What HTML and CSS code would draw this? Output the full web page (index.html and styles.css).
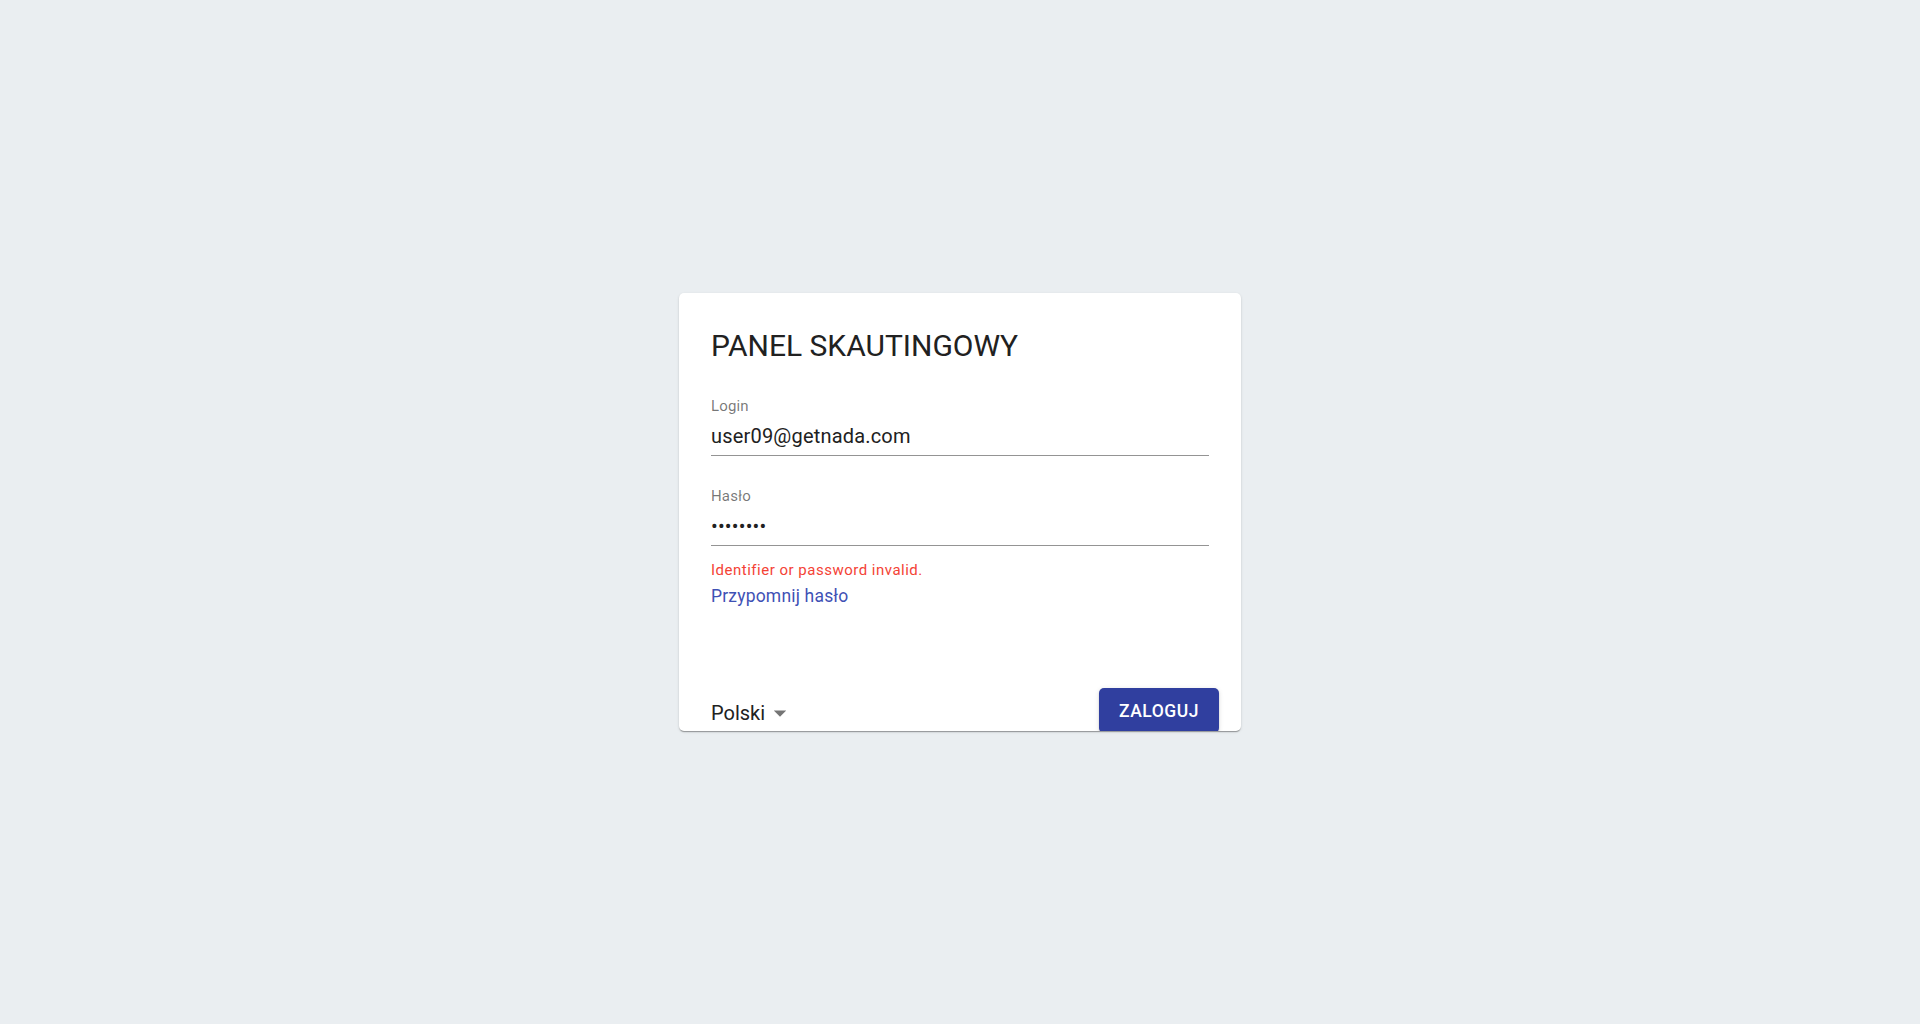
FILE: index.html
```html
<!DOCTYPE html>
<html lang="pl">
<head>
<meta charset="utf-8">
<title>Panel Skautingowy</title>
<link rel="stylesheet" href="styles.css">
</head>
<body>
<main class="page">
  <form class="card" onsubmit="return false">
    <h1 class="title">PANEL SKAUTINGOWY</h1>
    <div class="field field-login">
      <label class="field-label" for="login">Login</label>
      <div class="field-input">
        <input id="login" type="text" value="user09@getnada.com">
      </div>
    </div>
    <div class="field field-pass">
      <label class="field-label" for="pass">Hasło</label>
      <div class="field-input">
        <input id="pass" type="password" value="xxxxxxxx">
      </div>
    </div>
    <p class="error">Identifier or password invalid.</p>
    <a class="link" href="#">Przypomnij hasło</a>
    <div class="footer">
      <div class="lang">
        <span class="lang-text">Polski</span>
        <svg class="lang-icon" viewBox="0 0 24 24" width="30" height="30"><path d="M7 10l5 5 5-5z"/></svg>
      </div>
      <button class="btn" type="submit">ZALOGUJ</button>
    </div>
  </form>
</main>
</body>
</html>
```

FILE: styles.css
```css
html, body {
  margin: 0;
  padding: 0;
}
body {
  background: #eaeef1;
  font-family: Roboto, "Noto Sans", "Liberation Sans", sans-serif;
  color: rgba(0, 0, 0, 0.87);
}
.page {
  height: 100vh;
  display: flex;
  align-items: center;
  justify-content: center;
}
.card {
  box-sizing: border-box;
  width: 562px;
  height: 438px;
  background: #fff;
  border-radius: 5px;
  overflow: hidden;
  padding: 35px 32px 0 32px;
  box-shadow: 0px 2px 1px -1px rgba(0,0,0,0.2), 0px 1px 1px 0px rgba(0,0,0,0.14), 0px 1px 3px 0px rgba(0,0,0,0.12);
}
.title {
  margin: 0;
  font-size: 30px;
  line-height: 36px;
  font-weight: 400;
  color: #212121;
}
.field {
  display: flex;
  flex-direction: column;
}
.field-login {
  margin-top: 33px;
}
.field-pass {
  margin-top: 31px;
}
.field-label {
  font-size: 15px;
  line-height: 18px;
  letter-spacing: 0.00938em;
  color: rgba(0, 0, 0, 0.54);
}
.field-input {
  padding: 9px 0 7px 0;
  border-bottom: 1px solid rgba(0, 0, 0, 0.42);
}
.field-input input {
  display: block;
  width: 100%;
  box-sizing: border-box;
  border: 0;
  outline: 0;
  padding: 0;
  margin: 0;
  background: transparent;
  font-family: inherit;
  font-size: 20px;
  line-height: 24px;
  height: 24px;
  letter-spacing: 0.00938em;
  color: #212121;
}
.error {
  margin: 15px 0 0 0;
  font-size: 15px;
  line-height: 18px;
  letter-spacing: 0.5px;
  color: #f44336;
}
.link {
  display: block;
  margin-top: 7px;
  font-size: 17.5px;
  line-height: 21px;
  letter-spacing: 0.01071em;
  color: #3f51b5;
  text-decoration: none;
  width: max-content;
}
.footer {
  margin-top: 81px;
  margin-right: -10px;
  height: 45px;
  display: flex;
  align-items: center;
  justify-content: space-between;
}
.lang {
  display: flex;
  align-items: center;
  padding-top: 4px;
}
.lang-text {
  font-size: 20px;
  line-height: 24px;
  color: #212121;
}
.lang-icon {
  fill: rgba(0, 0, 0, 0.54);
  margin-top: 1px;
}
.btn {
  width: 120px;
  height: 45px;
  border: 0;
  border-radius: 5px;
  background: #303f9f;
  color: #fff;
  font-family: inherit;
  font-size: 17.5px;
  font-weight: 500;
  line-height: 21px;
  letter-spacing: 0.02857em;
  padding: 13px 20px 11px 20px;
  align-self: flex-start;
  box-shadow: 0px 3px 1px -2px rgba(0,0,0,0.2), 0px 2px 2px 0px rgba(0,0,0,0.14), 0px 1px 5px 0px rgba(0,0,0,0.12);
}
```
